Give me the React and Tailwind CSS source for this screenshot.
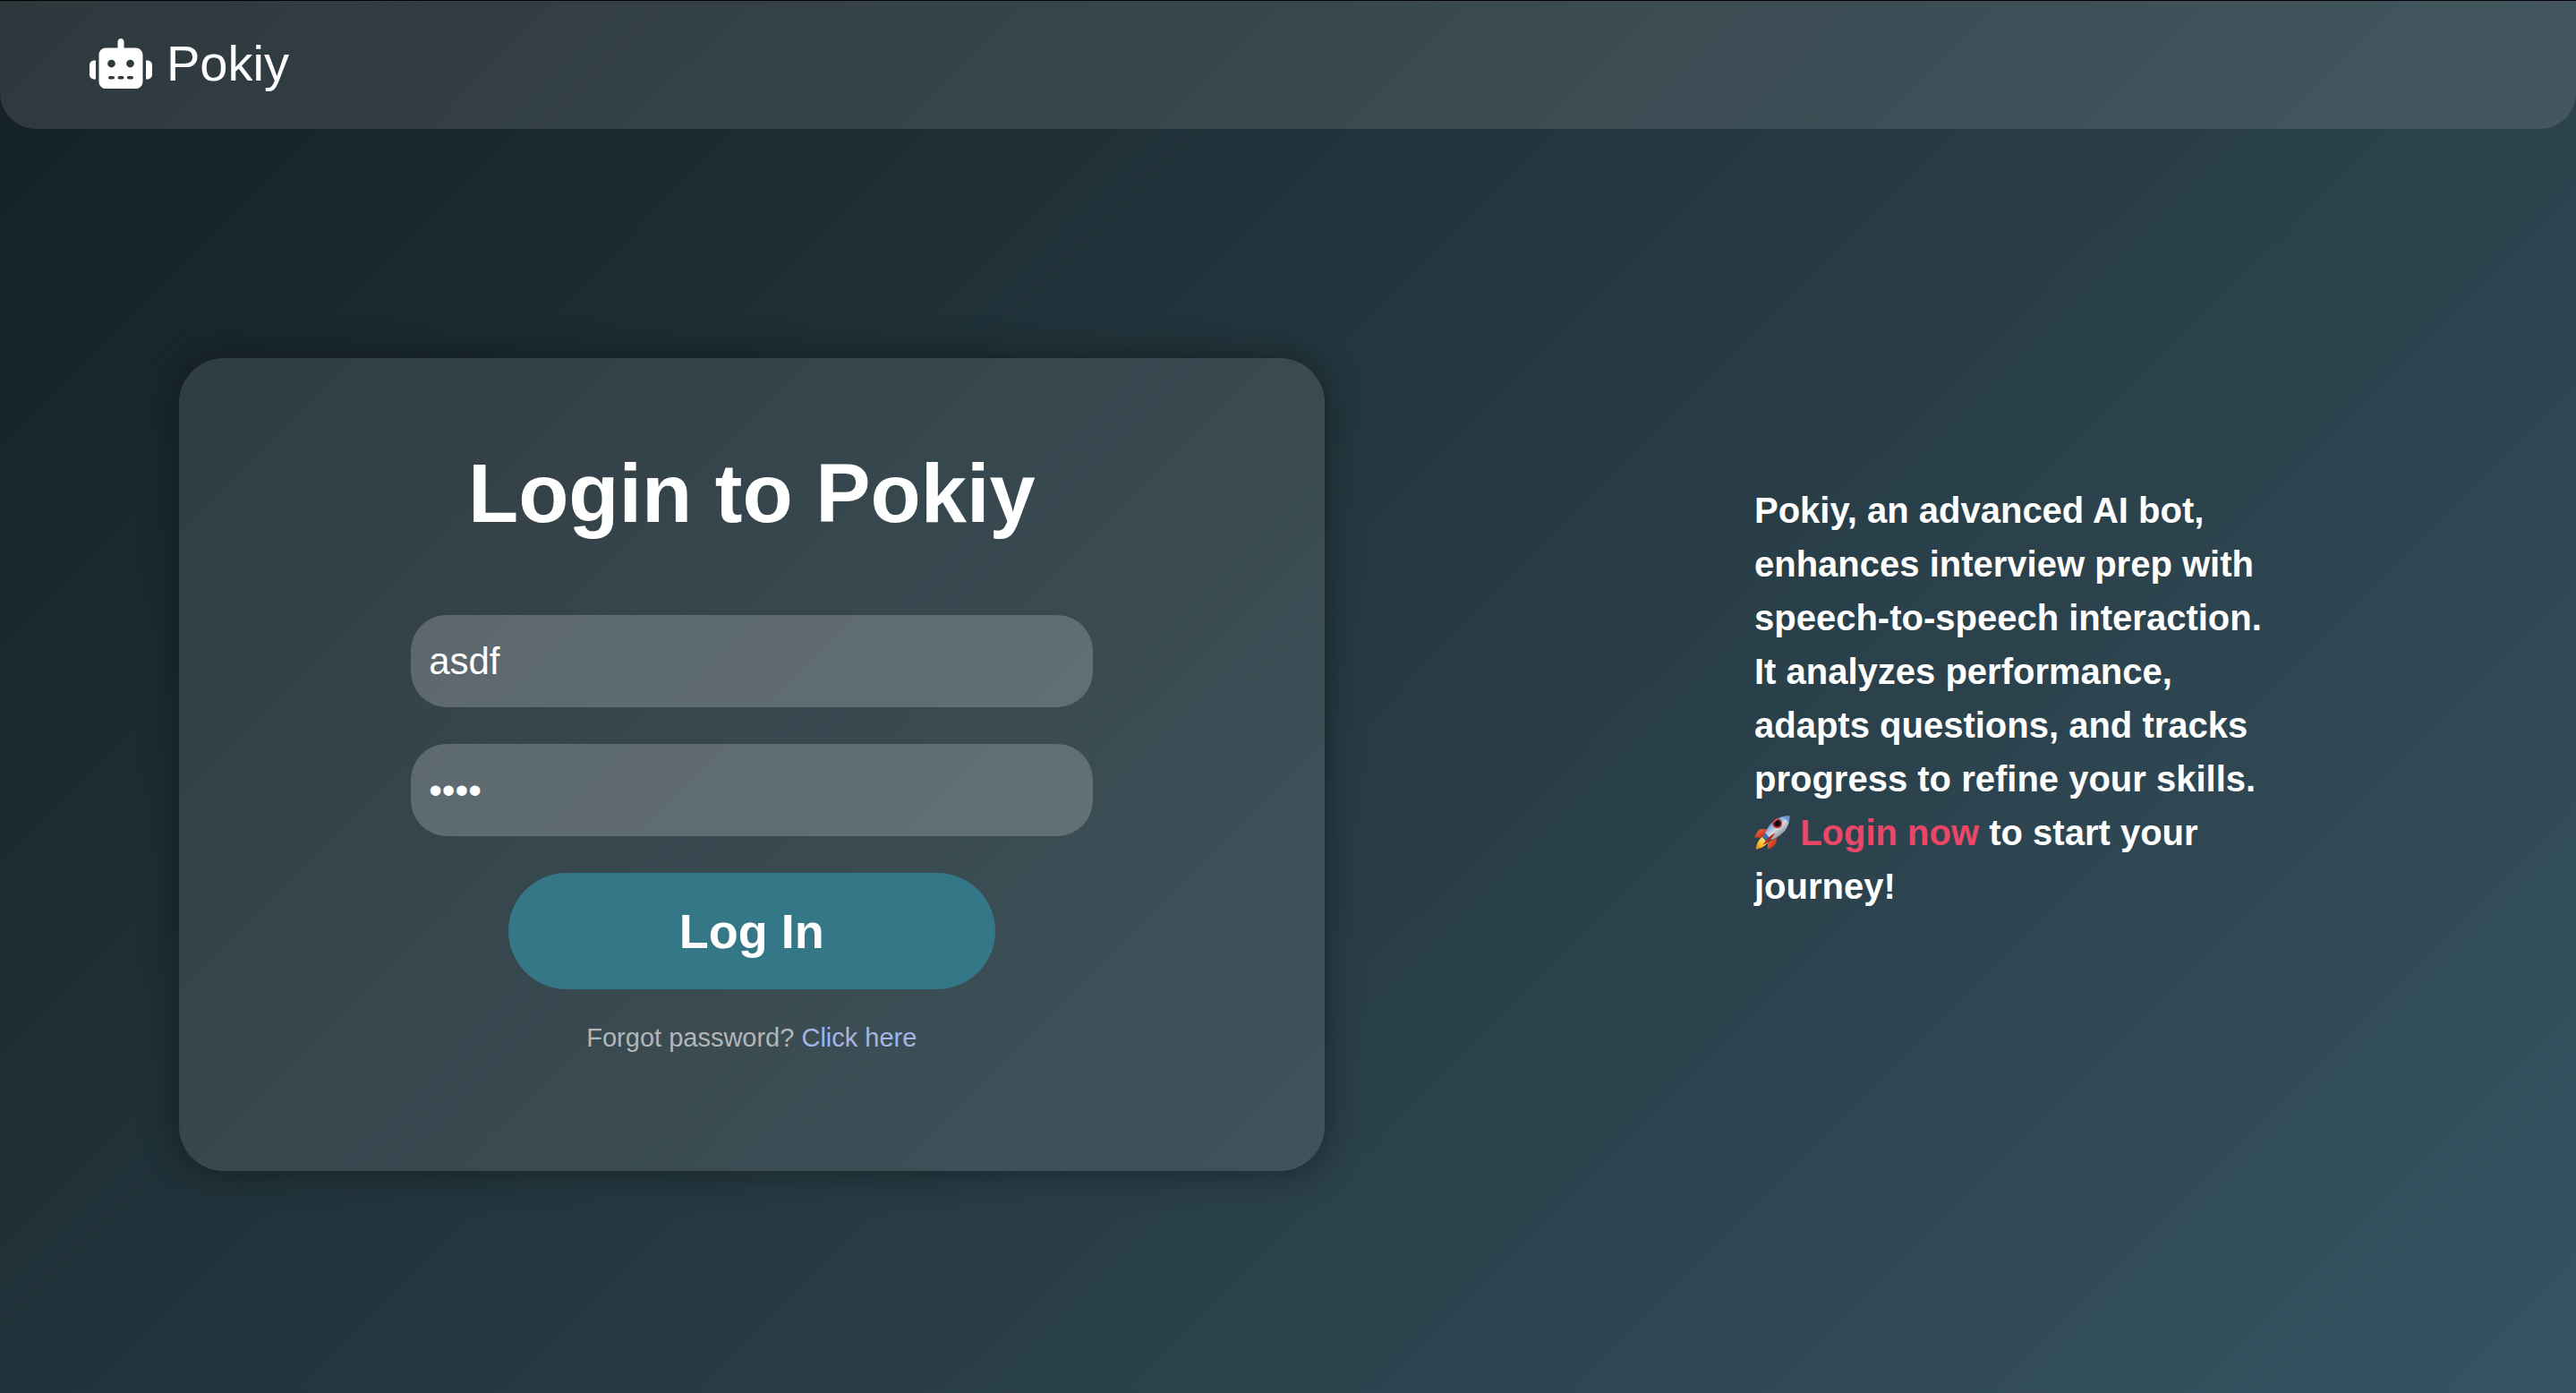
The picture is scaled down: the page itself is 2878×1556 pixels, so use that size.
import { FaRobot } from "react-icons/fa6";

function Rocket() {
  return (
    <svg
      role="img"
      aria-label="rocket"
      viewBox="0 0 120 114"
      className="inline-block h-[38px] w-[40px] align-[-5px]"
    >
      <defs>
        <linearGradient id="hull" x1="0.2" y1="0.1" x2="0.8" y2="0.8">
          <stop offset="0" stopColor="#3f6fae" />
          <stop offset="0.35" stopColor="#8fb2dc" />
          <stop offset="0.55" stopColor="#d3d9de" />
          <stop offset="1" stopColor="#77808a" />
        </linearGradient>
        <linearGradient id="fin" x1="0" y1="0" x2="1" y2="1">
          <stop offset="0" stopColor="#f2703c" />
          <stop offset="1" stopColor="#b81f16" />
        </linearGradient>
        <linearGradient id="flame" x1="1" y1="0" x2="0" y2="1">
          <stop offset="0" stopColor="#fff09a" />
          <stop offset="0.6" stopColor="#f9c02e" />
          <stop offset="1" stopColor="#ee7d1c" />
        </linearGradient>
      </defs>
      <path d="M46 46 L22 45 Q15 46 11 54 L0 73 L28 75 Z" fill="url(#fin)" />
      <path d="M74 76 L74 86 Q74 94 66 102 L45 114 L44 90 Z" fill="url(#fin)" />
      <path
        d="M118 2 Q80 0 56 26 Q40 44 33 68 L47 84 Q76 78 96 58 Q118 36 118 2 Z"
        fill="url(#hull)"
      />
      <path d="M94 4 Q106 1 118 2 Q119 14 115 27 Q108 12 94 4 Z" fill="#6d9ad6" />
      <path d="M36 58 L28 72 L44 87 L57 81 Z" fill="#3c6db0" />
      <path d="M26 72 Q8 84 5 113 Q34 108 44 90 Z" fill="url(#flame)" />
      <path d="M70 58 Q48 70 27 99 Q54 88 70 58 Z" fill="#b5241b" />
      <circle cx="77" cy="26" r="16" fill="#b3202a" />
      <circle cx="77" cy="26" r="10" fill="#140b10" />
      <path d="M66 24 Q68 14 78 12" stroke="#ef8f86" strokeWidth="3" fill="none" />
    </svg>
  );
}

function Header() {
  return (
    <header className="rounded-b-[40px] bg-white/11 px-[100px] pt-[38px] pb-[41px]">
      <a href="#" className="flex w-fit items-center gap-4 text-[56px] leading-[64px]">
        <FaRobot className="h-[56px] w-[70px]" />
        Pokiy
      </a>
    </header>
  );
}

const field =
  "h-[103px] w-full rounded-[40px] bg-white/20 px-5 text-[42px] text-white outline-none";

function LoginCard() {
  return (
    <form
      onSubmit={(e) => e.preventDefault()}
      className="flex w-[54.5%] flex-col items-center rounded-[50px] bg-white/10 pt-[98px] pb-[132px] shadow-[0_0_40px_rgba(0,0,0,0.42)]"
    >
      <h1 className="text-[92px] leading-[107px] font-bold">Login to Pokiy</h1>
      <div className="mt-[82px] flex w-[59.5%] flex-col items-center gap-[41px]">
        <input aria-label="Username" type="text" defaultValue="asdf" className={field} />
        <input aria-label="Password" type="password" defaultValue="asdf" className={field} />
        <button
          type="submit"
          className="h-[130px] w-[544px] max-w-full rounded-full bg-[#347786] text-[54px] font-bold"
        >
          Log In
        </button>
      </div>
      <p className="mt-[37px] text-[29px] leading-[34px] text-[#b5b5b5]">
        Forgot password?{" "}
        <a href="#" className="text-[#a3b4e6]">
          Click here
        </a>
      </p>
    </form>
  );
}

export default function App() {
  return (
    <div className="flex min-h-screen flex-col border-t border-black bg-[linear-gradient(135deg,#142026,#263a42,#365362)] font-['Liberation_Sans',Arial,sans-serif] text-white">
      <Header />
      <main className="flex items-start justify-between pt-[256px] pr-[330px] pb-[120px] pl-[200px]">
        <LoginCard />
        <p className="mt-[140px] w-[588px] text-[40px] leading-[60px] font-bold">
          Pokiy, an advanced AI bot, enhances interview prep with speech-to-speech interaction. It
          analyzes performance, adapts questions, and tracks progress to refine your skills.{" "}
          <Rocket />{" "}
          <a href="#" className="text-[#ea4768]">
            Login now
          </a>{" "}
          to start your journey!
        </p>
      </main>
    </div>
  );
}
